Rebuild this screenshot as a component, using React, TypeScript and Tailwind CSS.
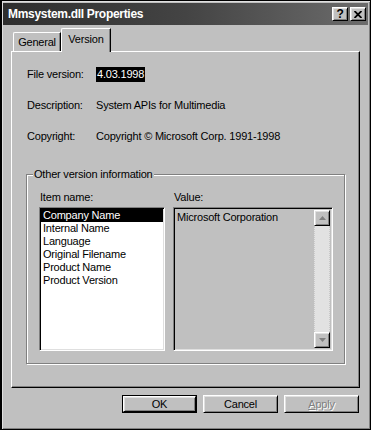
import React from 'react';

const raised =
  'bg-[#c0c0c0] border border-t-white border-l-white border-r-black border-b-black shadow-[inset_1px_1px_0_#dfdfdf,inset_-1px_-1px_0_#808080]';
const sunken =
  'border border-t-[#808080] border-l-[#808080] border-r-white border-b-white shadow-[inset_1px_1px_0_#000,inset_-1px_-1px_0_#dfdfdf]';

function Arrow({ up }: { up?: boolean }) {
  return (
    <svg width="7" height="4" viewBox="0 0 7 4">
      <path d={up ? 'M3.5 0 L7 4 L0 4 Z' : 'M0 0 L7 0 L3.5 4 Z'} fill="#808080" />
    </svg>
  );
}

export default function App() {
  const items = ['Company Name', 'Internal Name', 'Language', 'Original Filename', 'Product Name', 'Product Version'];

  return (
    <div className="w-[371px] h-[430px] bg-[#c0c0c0] border border-l-2 border-black shadow-[inset_1px_1px_0_#dfdfdf,inset_-1px_-1px_0_#808080] flex flex-col text-[11px] tracking-[-0.2px] text-black font-['Liberation_Sans',Arial,sans-serif]">
      {/* Title bar */}
      <div className="ml-[1px] mr-[2px] mt-[2px] h-[22px] flex items-center bg-gradient-to-r from-[#2e2e2e] via-[#444444] to-[#6c6c6c] pl-[5px] pr-[2px]">
        <span className="text-white font-bold text-[12px] tracking-[-0.3px] flex-1">Mmsystem.dll Properties</span>
        <div className="flex gap-[2px]">
          <button className={`${raised} w-[16px] h-[14px] flex items-center justify-center font-bold text-[12px] leading-none`}>?</button>
          <button className={`${raised} w-[16px] h-[14px] flex items-center justify-center`}>
            <svg width="8" height="7" viewBox="0 0 8 7">
              <path d="M0.5 0 L7.5 7 M7.5 0 L0.5 7" stroke="#000" strokeWidth="1.8" />
            </svg>
          </button>
        </div>
      </div>

      {/* Tabs */}
      <div className="h-[26px] flex items-end pl-[9px]">
        <div className="ml-[2px] w-[48px] h-[19px] border-t border-l border-white border-r border-r-black shadow-[inset_-1px_0_0_#808080] rounded-tl-[2px] flex items-center justify-center pt-[1px]">
          General
        </div>
        <div className="relative z-10 -mb-[1px] w-[50px] h-[24px] bg-[#c0c0c0] border-t border-l border-white border-r border-r-black shadow-[inset_-1px_0_0_#808080] rounded-tl-[2px] flex items-center justify-center pb-[3px]">
          Version
        </div>
      </div>

      {/* Tab panel */}
      <div className="ml-[9px] w-[349px] h-[337px] border border-t-white border-l-white border-r-black border-b-black shadow-[inset_-1px_-1px_0_#808080] flex flex-col">
        <div className="pt-[15px] pl-[15px] flex flex-col gap-[16px]">
          <div className="flex items-center h-[15px]">
            <span className="w-[69px]">File version:</span>
            <span className="bg-black text-white px-[1px] h-[15px] leading-[15px]">4.03.1998</span>
          </div>
          <div className="flex items-center h-[15px]">
            <span className="w-[69px]">Description:</span>
            <span>System APIs for Multimedia</span>
          </div>
          <div className="flex items-center h-[15px]">
            <span className="w-[69px]">Copyright:</span>
            <span>Copyright © Microsoft Corp. 1991-1998</span>
          </div>
        </div>

        {/* Group box */}
        <div className="relative mt-[30px] ml-[14px] w-[319px] h-[190px] border border-[#808080] shadow-[1px_1px_0_#fff,inset_1px_1px_0_#fff]">
          <span className="absolute -top-[8px] left-[6px] px-[1px] bg-[#c0c0c0] leading-[14px]">Other version information</span>
          <div className="pt-[16px] pl-[12px]">
            <div className="flex leading-[13px]">
              <span className="w-[134px] pl-[1px]">Item name:</span>
              <span className="pl-[1px]">Value:</span>
            </div>
            <div className="mt-[3px] flex gap-[8px]">
              <div className={`${sunken} w-[126px] h-[144px] bg-white p-[1px]`}>
                {items.map((it, i) => (
                  <div
                    key={it}
                    className={`h-[13px] leading-[13px] px-[2px] ${i === 0 ? 'bg-black text-white' : ''}`}
                  >
                    {it}
                  </div>
                ))}
              </div>
              <div className={`${sunken} w-[160px] h-[144px] bg-[#c0c0c0] flex p-[2px]`}>
                <div className="flex-1 pl-[1px] leading-[13px] pt-[1px]">Microsoft Corporation</div>
                <div className="w-[16px] flex flex-col bg-[#e2e2e2]">
                  <div className={`${raised} h-[16px] flex items-center justify-center`}>
                    <Arrow up />
                  </div>
                  <div className="flex-1 border-x border-dotted border-[#c8c8c8]" />
                  <div className={`${raised} h-[16px] flex items-center justify-center`}>
                    <Arrow />
                  </div>
                </div>
              </div>
            </div>
          </div>
        </div>
      </div>

      {/* Buttons */}
      <div className="mt-[7px] ml-[9px] w-[349px] flex justify-end gap-[6px] pr-[1px]">
        <button className="w-[75px] h-[18px] border border-black">
          <div className={`${raised} w-full h-full flex items-center justify-center`}>OK</div>
        </button>
        <button className={`${raised} w-[75px] h-[18px] flex items-center justify-center`}>Cancel</button>
        <button className={`${raised} w-[75px] h-[18px] flex items-center justify-center text-[#808080] [text-shadow:1px_1px_0_#fff]`}>
          <span>
            <u>A</u>pply
          </span>
        </button>
      </div>
    </div>
  );
}
